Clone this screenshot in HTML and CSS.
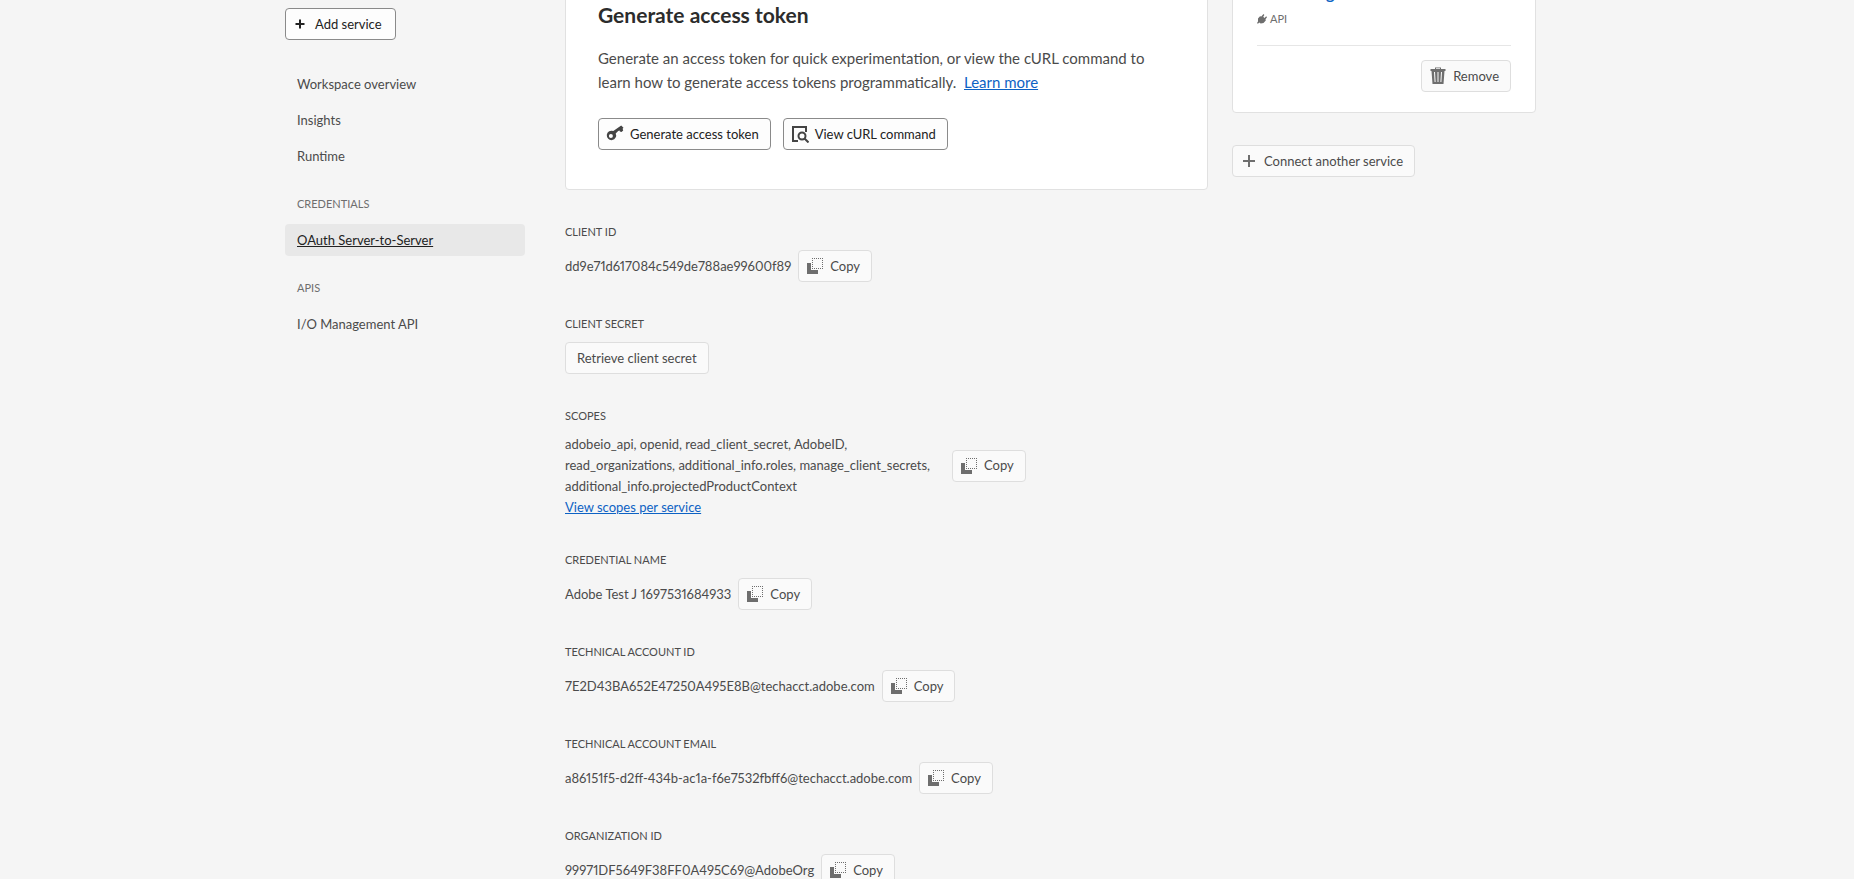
FILE: index.html
```html
<!DOCTYPE html>
<html lang="en">
<head>
    <meta charset="UTF-8">
    <meta name="viewport" content="width=device-width, initial-scale=1.0">
    <title>OAuth Server-to-Server</title>
    <link rel="stylesheet" href="styles.css">
</head>
<body>
    <!-- Shared icons -->
    <svg class="sprite" aria-hidden="true">
        <symbol id="icon-copy" viewBox="0 0 18 18">
            <path d="M1 6h4v7h7v4H1z"/>
            <path d="M6 1.5h11M6 11.5h11M6.5 3v8M16.5 3v8" fill="none" stroke="currentColor" stroke-dasharray="1 1"/>
        </symbol>
        <symbol id="icon-plus" viewBox="0 0 18 18">
            <path d="M8 3h2v5h5v2h-5v5H8v-5H3V8h5z"/>
        </symbol>
    </svg>

    <div class="page">
        <aside class="sidebar">
            <button type="button" class="btn btn-primary btn-add">
                <svg class="icon" viewBox="0 0 18 18"><path d="M8 4.5h2V8h3.5v2H10v3.5H8V10H4.5V8H8z"/></svg>
                Add service
            </button>
            <nav class="nav">
                <a href="#" class="nav-item">Workspace overview</a>
                <a href="#" class="nav-item">Insights</a>
                <a href="#" class="nav-item">Runtime</a>
                <h2 class="nav-heading">CREDENTIALS</h2>
                <a href="#" class="nav-item active">OAuth Server-to-Server</a>
                <h2 class="nav-heading">APIS</h2>
                <a href="#" class="nav-item">I/O Management API</a>
            </nav>
        </aside>

        <main class="main">
            <section class="card token-card">
                <h1>Generate access token</h1>
                <p>Generate an access token for quick experimentation, or view the cURL command to learn how to generate access tokens programmatically.&nbsp; <a href="#">Learn more</a></p>
                <div class="actions">
                    <button type="button" class="btn btn-primary">
                        <svg class="icon" viewBox="0 0 18 18"><path fill-rule="evenodd" d="M15.2.5l2.300 2.300-.9.900.6 1.700-1.700 1.700-1.600-.6-.4-1-1.300.4L9.700 8.400a4.700 4.700 0 1 1-2.400-2.300zM4.900 8.900a2 2 0 1 0 0 4 2 2 0 0 0 0-4z"/></svg>
                        Generate access token
                    </button>
                    <button type="button" class="btn btn-primary">
                        <svg class="icon" viewBox="0 0 18 18"><path d="M7 16H2V2h13v5" fill="none" stroke="currentColor" stroke-width="2"/><circle cx="11" cy="11" r="3.5" fill="none" stroke="currentColor" stroke-width="2"/><path d="M13.5 13.5l4 4" stroke="currentColor" stroke-width="2"/></svg>
                        View cURL command
                    </button>
                </div>
            </section>

            <section class="field">
                <h3>CLIENT ID</h3>
                <div class="field-row">
                    <span>dd9e71d617084c549de788ae99600f89</span>
                    <button type="button" class="btn"><svg class="icon"><use href="#icon-copy"/></svg>Copy</button>
                </div>
            </section>

            <section class="field">
                <h3>CLIENT SECRET</h3>
                <button type="button" class="btn btn-text">Retrieve client secret</button>
            </section>

            <section class="field">
                <h3>SCOPES</h3>
                <div class="field-row">
                    <span class="scopes">adobeio_api, openid, read_client_secret, AdobeID, read_organizations, additional_info.roles, manage_client_secrets, additional_info.projectedProductContext</span>
                    <button type="button" class="btn"><svg class="icon"><use href="#icon-copy"/></svg>Copy</button>
                </div>
                <a href="#" class="scopes-link">View scopes per service</a>
            </section>

            <section class="field">
                <h3>CREDENTIAL NAME</h3>
                <div class="field-row">
                    <span>Adobe Test J 1697531684933</span>
                    <button type="button" class="btn"><svg class="icon"><use href="#icon-copy"/></svg>Copy</button>
                </div>
            </section>

            <section class="field">
                <h3>TECHNICAL ACCOUNT ID</h3>
                <div class="field-row">
                    <span>7E2D43BA652E47250A495E8B@techacct.adobe.com</span>
                    <button type="button" class="btn"><svg class="icon"><use href="#icon-copy"/></svg>Copy</button>
                </div>
            </section>

            <section class="field">
                <h3>TECHNICAL ACCOUNT EMAIL</h3>
                <div class="field-row">
                    <span>a86151f5-d2ff-434b-ac1a-f6e7532fbff6@techacct.adobe.com</span>
                    <button type="button" class="btn"><svg class="icon"><use href="#icon-copy"/></svg>Copy</button>
                </div>
            </section>

            <section class="field">
                <h3>ORGANIZATION ID</h3>
                <div class="field-row">
                    <span>99971DF5649F38FF0A495C69@AdobeOrg</span>
                    <button type="button" class="btn"><svg class="icon"><use href="#icon-copy"/></svg>Copy</button>
                </div>
            </section>
        </main>

        <aside class="services">
            <section class="card service-card">
                <a href="#" class="service-name">I/O Management API</a>
                <div class="service-type">
                    <svg class="icon-small" viewBox="0 0 10 10"><path d="M1 4.500L3 2.200l1.300.4L6.500 0l.9.900-1.200 1.800 1.300 1.200L9.200 2.300l.8.900-1.500 2 .3 1.300L6.500 9l-2.800.4-1.400-.8L.9 9.800 0 8.900l1-1.400z"/></svg>
                    API
                </div>
                <div class="service-footer">
                    <button type="button" class="btn">
                        <svg class="icon" viewBox="0 0 18 18"><path fill-rule="evenodd" d="M6 2V.5h6V2h4.500v2h-1l-1 13h-11l-1-13h-1V2zm1 0h4v-.7H7zM5 5l.6 10h1L6 5zm3.500 0v10h1V5zM12 5l-.6 10h1L13 5z"/></svg>
                        Remove
                    </button>
                </div>
            </section>
            <button type="button" class="btn"><svg class="icon"><use href="#icon-plus"/></svg>Connect another service</button>
        </aside>
    </div>
</body>
</html>
```
FILE: styles.css
```css
* {
    box-sizing: border-box;
}
html, body {
    height: 100%;
}
body {
    margin: 0;
    padding-right: 33px;
    overflow: hidden;
    background-color: #f5f5f5;
    color: #4b4b4b;
    font-family: Lato, "Open Sans", sans-serif;
    font-size: 13px;
    font-variant-numeric: proportional-nums;
    line-height: 21px;
}
h1, h2, h3, p {
    margin: 0;
}
a {
    color: #0d62c4;
}
.sprite {
    display: none;
}
.page {
    display: grid;
    grid-template-columns: 240px minmax(0, 1fr) 304px;
    max-width: 1251px;
    margin: -30px auto 0;
}

/* Buttons */
.btn {
    display: inline-flex;
    align-items: center;
    gap: 6px;
    height: 32px;
    padding: 0 11px 0 7px;
    border: 1px solid #dedede;
    border-radius: 4px;
    background-color: #fafafa;
    color: #4b4b4b;
    font: inherit;
    white-space: nowrap;
    cursor: pointer;
}
.btn:hover {
    background-color: #f0f0f0;
}
.btn-primary {
    border-color: #8a8a8a;
    background-color: #fdfdfd;
    color: #222;
}
.btn-text {
    padding: 0 11px;
}
.icon {
    width: 18px;
    height: 18px;
    flex: none;
    color: #6e6e6e;
    fill: currentColor;
}
.btn-primary .icon {
    color: #444;
}
.btn-add {
    padding: 0 13px 0 5px;
}

/* Sidebar */
.sidebar {
    padding-top: 38px;
}
.sidebar .icon {
    color: #222;
}
.nav {
    display: flex;
    flex-direction: column;
    gap: 4px;
    margin-top: 28px;
}
.nav-item {
    padding: 6px 12px 5px;
    border-radius: 4px;
    color: #4b4b4b;
    text-decoration: none;
}
.nav-item.active {
    background-color: #e8e8e8;
    color: #222;
    text-decoration: underline;
}
.nav-heading {
    margin-top: 12px;
    padding: 0 12px;
    color: #6e6e6e;
    font-size: 11px;
    font-weight: normal;
    line-height: 32px;
}

/* Main column */
.main {
    display: flex;
    flex-direction: column;
    gap: 34px;
    margin: 0 24px 0 40px;
}
.card {
    border: 1px solid #e1e1e1;
    border-radius: 4px;
    background-color: #fff;
}
.token-card {
    padding: 32px 32px 39px;
}
.token-card h1 {
    color: #2c2c2c;
    font-size: 21px;
    line-height: 24px;
}
.token-card p {
    margin-top: 19px;
    font-size: 15px;
    line-height: 24px;
}
.actions {
    display: flex;
    gap: 12px;
    margin-top: 24px;
}
.field h3 {
    margin-bottom: 10px;
    font-size: 11px;
    font-weight: normal;
    line-height: 16px;
}
.field-row {
    display: flex;
    align-items: center;
    gap: 7px;
}
.scopes {
    max-width: 380px;
}
.scopes-link {
    display: block;
    width: fit-content;
}

/* Services column */
.service-card {
    margin-bottom: 32px;
    padding: 10px 24px 20px;
}
.service-name {
    display: block;
    font-size: 16px;
    font-weight: bold;
    line-height: 24px;
    text-decoration: none;
}
.service-type {
    display: flex;
    align-items: center;
    gap: 3px;
    margin-top: 6px;
    padding-bottom: 18px;
    border-bottom: 1px solid #e6e6e6;
    color: #6e6e6e;
    font-size: 11px;
    line-height: 16px;
}
.icon-small {
    width: 10px;
    height: 10px;
    fill: currentColor;
}
.service-footer {
    display: flex;
    justify-content: flex-end;
    padding-top: 14px;
}
```
